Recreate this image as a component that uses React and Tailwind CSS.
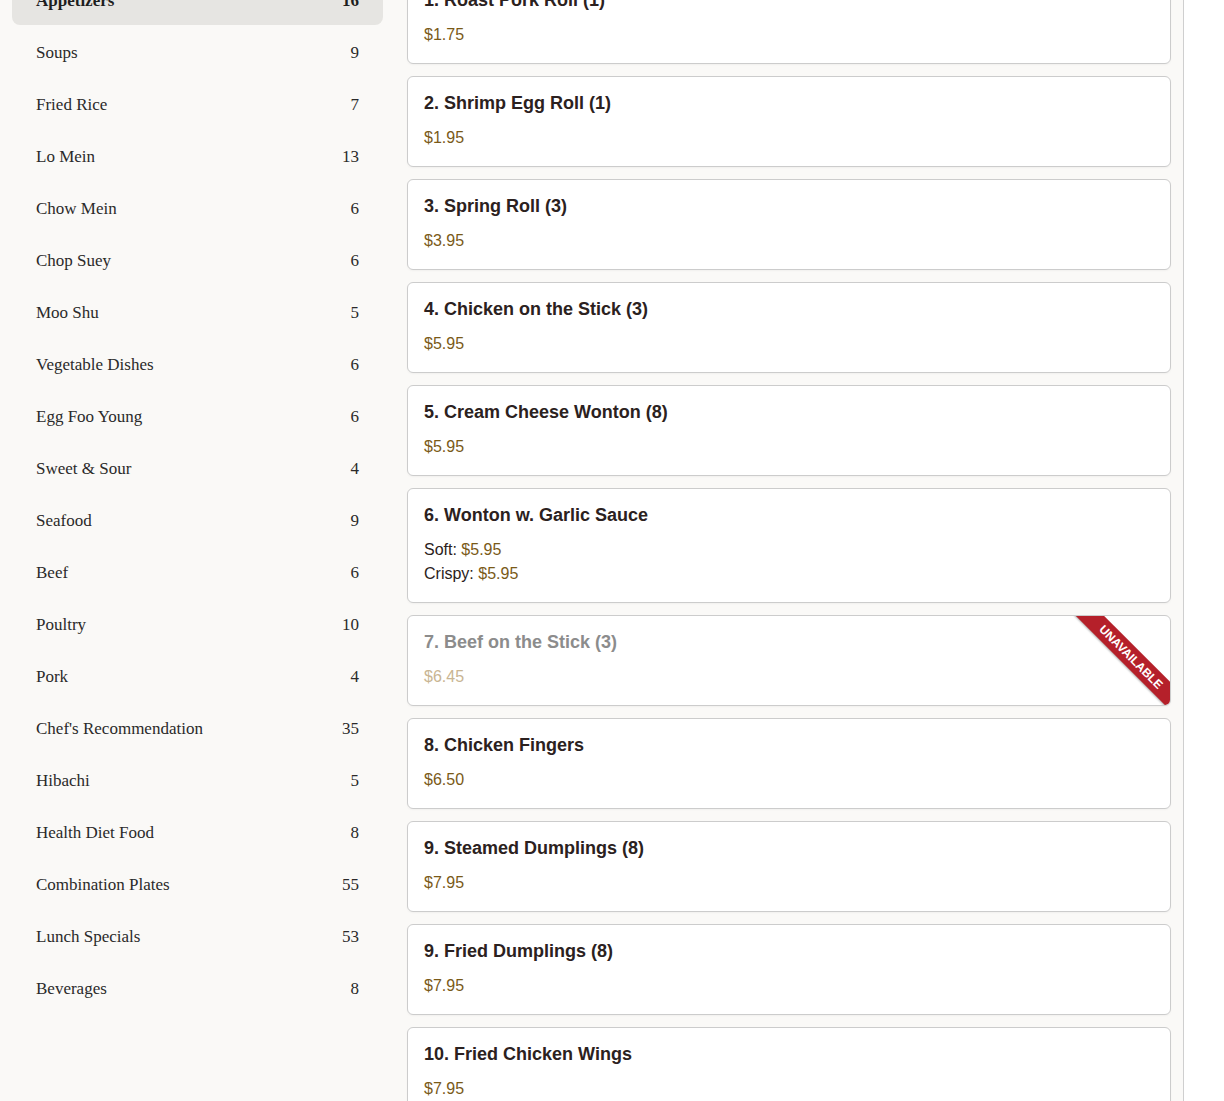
import React from "react";

const cats = [
  ["Appetizers", 16],
  ["Soups", 9],
  ["Fried Rice", 7],
  ["Lo Mein", 13],
  ["Chow Mein", 6],
  ["Chop Suey", 6],
  ["Moo Shu", 5],
  ["Vegetable Dishes", 6],
  ["Egg Foo Young", 6],
  ["Sweet & Sour", 4],
  ["Seafood", 9],
  ["Beef", 6],
  ["Poultry", 10],
  ["Pork", 4],
  ["Chef's Recommendation", 35],
  ["Hibachi", 5],
  ["Health Diet Food", 8],
  ["Combination Plates", 55],
  ["Lunch Specials", 53],
  ["Beverages", 8],
];

const items = [
  { name: "1. Roast Pork Roll (1)", prices: [[null, "$1.75"]] },
  { name: "2. Shrimp Egg Roll (1)", prices: [[null, "$1.95"]] },
  { name: "3. Spring Roll (3)", prices: [[null, "$3.95"]] },
  { name: "4. Chicken on the Stick (3)", prices: [[null, "$5.95"]] },
  { name: "5. Cream Cheese Wonton (8)", prices: [[null, "$5.95"]] },
  { name: "6. Wonton w. Garlic Sauce", prices: [["Soft:", "$5.95"], ["Crispy:", "$5.95"]] },
  { name: "7. Beef on the Stick (3)", prices: [[null, "$6.45"]], unavailable: true },
  { name: "8. Chicken Fingers", prices: [[null, "$6.50"]] },
  { name: "9. Steamed Dumplings (8)", prices: [[null, "$7.95"]] },
  { name: "9. Fried Dumplings (8)", prices: [[null, "$7.95"]] },
  { name: "10. Fried Chicken Wings", prices: [[null, "$7.95"]] },
];

function Card({ item }) {
  const un = item.unavailable;
  return (
    <div className="relative overflow-hidden rounded-[6px] border border-[#cccccc] bg-white px-4 pt-[15px] pb-4 shadow-[0_1px_2px_rgba(0,0,0,0.04)]">
      <div
        className={
          "text-[18px] leading-[22px] font-bold mb-[12px] " +
          (un ? "text-[#8c8c8c]" : "text-[#2b2120]")
        }
      >
        {item.name}
      </div>
      {item.prices.map(([label, p], i) => (
        <div key={i} className="text-[16px] leading-[24px]">
          {label && <span className="text-[#2b2120]">{label} </span>}
          <span className={un ? "text-[#c9b593]" : "text-[#7a5a18]"}>{p}</span>
        </div>
      ))}
      {un && (
        <div className="absolute right-[-31px] top-[31px] w-[140px] h-[20px] rotate-45 bg-[#b5202a] flex items-center justify-center text-white text-[12px] font-bold leading-none shadow-[0_1px_2px_rgba(0,0,0,0.3)]">
          UNAVAILABLE
        </div>
      )}
    </div>
  );
}

export default function App() {
  return (
    <div className="w-[1224px] min-h-[1101px] bg-white overflow-hidden" style={{ fontFamily: '"Liberation Sans", Arial, sans-serif' }}>
      <div className="flex w-[1184px] bg-[#faf9f7] border-r border-[#cfcfcf] mt-[-40px] min-h-[1200px]">
        <div className="w-[395px] shrink-0 px-3 pt-[17px]" style={{ fontFamily: '"Liberation Serif", "Times New Roman", serif' }}>
          <div className="flex flex-col gap-1">
            {cats.map(([n, c], i) => (
              <div
                key={n}
                className={
                  "h-[48px] flex items-center justify-between px-6 rounded-[8px] text-[17px] " +
                  (i === 0 ? "bg-[#e6e5e2] font-bold text-[#1e1e1e]" : "text-[#2a2a2a]")
                }
              >
                <span>{n}</span>
                <span>{c}</span>
              </div>
            ))}
          </div>
        </div>
        <div className="flex-1 px-3 pt-[13px]">
          <div className="flex flex-col gap-[12px]">
            {items.map((it, i) => (
              <Card key={i} item={it} />
            ))}
          </div>
        </div>
      </div>
    </div>
  );
}
